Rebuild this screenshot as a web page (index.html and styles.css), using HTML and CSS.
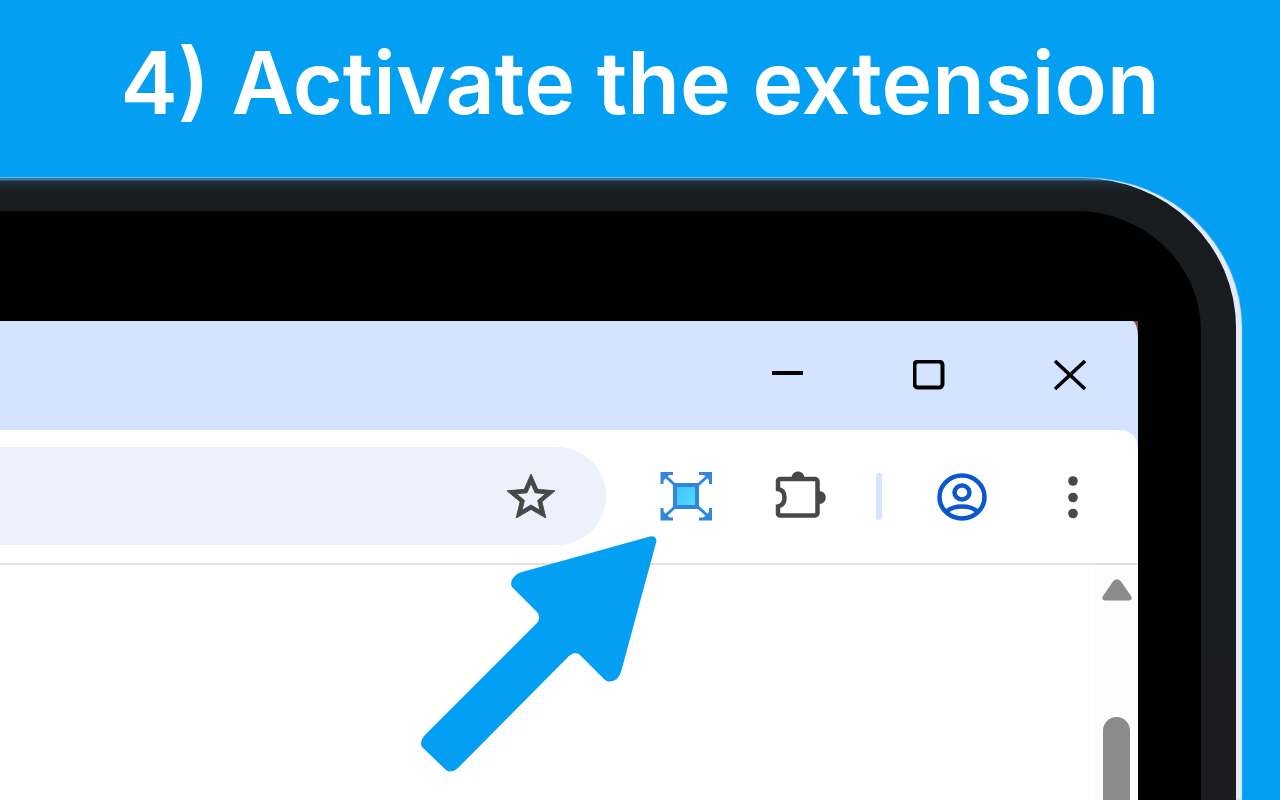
FILE: index.html
```html
<!DOCTYPE html>
<html lang="en">
<head>
  <meta charset="UTF-8">
  <meta name="viewport" content="width=device-width, initial-scale=1">
  <title>Activate the extension</title>
  <link rel="stylesheet" href="styles.css">
</head>
<body>

  <header class="heading">
    <h1>4) Activate the extension</h1>
  </header>

  <main class="laptop">
    <div class="bezel">
      <div class="screen">

        <div class="titlebar">
          <button class="win-btn" aria-label="Minimize">
            <svg viewBox="0 0 32 32"><path d="M0 13h31" stroke-width="4"/></svg>
          </button>
          <button class="win-btn" aria-label="Maximize">
            <svg viewBox="0 0 32 32"><rect x="1.500" y="1.500" width="28" height="26" rx="3.500" stroke-width="4"/></svg>
          </button>
          <button class="win-btn" aria-label="Close">
            <svg viewBox="0 0 32 32"><path d="M1 1l30 28M31 1L1 29" stroke-width="3.500"/></svg>
          </button>
        </div>

        <div class="toolbar-wrap">
          <div class="toolbar">
            <div class="omnibox">
              <button class="star-btn" aria-label="Bookmark this page">
                <svg viewBox="2 2 20 19" preserveAspectRatio="none"><path d="M22 9.240l-7.190-.62L12 2 9.190 8.630 2 9.240l5.460 4.730L5.820 21 12 17.270 18.180 21l-1.630-7.030L22 9.240zM12 15.400l-3.760 2.270 1-4.280-3.320-2.880 4.380-.38L12 6.100l1.710 4.040 4.380.38-3.320 2.880 1 4.280L12 15.400z"/></svg>
              </button>
            </div>

            <button class="tool-btn" aria-label="Fullscreen extension">
              <svg viewBox="0 0 60 60">
                <defs>
                  <linearGradient id="sq" x1="0" y1="0" x2="1" y2="1">
                    <stop offset="0" stop-color="#3fc4f8"/>
                    <stop offset="1" stop-color="#55dcff"/>
                  </linearGradient>
                </defs>
                <g fill="none" stroke="#2f86dc" stroke-width="3">
                  <path d="M6 18V7.500H17M7 8l12 11"/>
                  <path d="M43 7.500h11.500V18M54 8L42 19"/>
                  <path d="M6 42v11H17M7 52l12-11"/>
                  <path d="M43 53h11.500V42M54 52L42 41"/>
                  <rect x="19" y="19" width="22" height="22" fill="url(#sq)" stroke-width="4"/>
                </g>
                <g fill="#2f86dc">
                  <path d="M6 7h9l-9 9zM55 7v9l-9-9zM6 53v-9l9 9zM55 53h-9l9-9z"/>
                </g>
              </svg>
            </button>

            <button class="tool-btn" aria-label="Extensions">
              <svg viewBox="0 0 60 60">
                <path d="M14 13H49a2.500 2.500 0 0 1 2.500 2.500V47a2.500 2.500 0 0 1-2.500 2.500H14a2 2 0 0 1-2-2V40.500Q18.500 39 18.500 31.500T12 23V15a2 2 0 0 1 2-2z" fill="none" stroke="#484848" stroke-width="4.500"/>
                <path d="M25.500 12.500c0-9.500 13-9.500 13 0zM53 25c9 0 9 13 0 13z" fill="#484848"/>
              </svg>
            </button>

            <span class="divider"></span>

            <button class="tool-btn" aria-label="Profile">
              <svg viewBox="0 0 60 60" fill="none" stroke="#0b57d0" stroke-width="4.500">
                <ellipse cx="30" cy="31" rx="22.500" ry="21.500"/>
                <ellipse cx="30" cy="26.500" rx="7.500" ry="7"/>
                <path d="M14.500 45.500Q20 40.500 30 40.500t15.500 5"/>
              </svg>
            </button>

            <button class="tool-btn" aria-label="Menu">
              <svg viewBox="0 0 60 60" fill="#484848">
                <circle cx="31" cy="15" r="4.800"/>
                <circle cx="31" cy="31.500" r="4.800"/>
                <circle cx="31" cy="47.500" r="4.800"/>
              </svg>
            </button>
          </div>
        </div>

        <div class="page">
          <div class="scrollbar">
            <svg class="scroll-up" viewBox="0 0 30 22"><path d="M11 2.500Q15-2 19 2.500L29 17q2 4-2 4.500H3Q-1 21 1 17z"/></svg>
            <div class="thumb"></div>
          </div>
        </div>

        <!-- points at the extension icon -->
        <svg class="arrow" viewBox="0 0 238 238">
          <path d="M230 .5Q236-.5 236.500 5L201 136Q198 145 190 145.500Q187 146 184.500 143.500L161 120Q156 114 149 120L38 232Q31 238 26 234L2 211Q-1 206 5 199L117 87Q121.500 82 117 76L92 51Q89 45 96 39Q98 37 102 36z"/>
        </svg>
      </div>
    </div>
  </main>

</body>
</html>
```
FILE: styles.css
```css
* {
  margin: 0;
  padding: 0;
  box-sizing: border-box;
}

body {
  height: 100vh;
  display: flex;
  flex-direction: column;
  overflow: hidden;
  background-color: #039ff3;
  font-family: Inter, sans-serif;
}

button {
  border: none;
  background: none;
  cursor: pointer;
}

svg {
  display: block;
}

.heading {
  padding: 28px 0 40px;
  text-align: center;
  color: white;
}

.heading h1 {
  font-size: 86px;
  line-height: 110px;
  font-weight: 600;
  white-space: nowrap;
}

.laptop {
  flex: 1;
  min-height: 0;
  display: flex;
  margin-right: 44px;
  padding: 33px 35px 0 0;
  border-top-right-radius: 155px 150px;
  background: linear-gradient(#3f7898 0, #3f7898 2px, #20323e 3px, #191c1f 14px, #1c1c1f 100%);
  box-shadow: 6px 0 1px #e6eaf8, 0 -1px 1px #4cb6ee;
}

.bezel {
  flex: 1;
  min-width: 0;
  display: flex;
  padding: 110px 63px 0 0;
  border-top-right-radius: 125px 120px;
  background-color: black;
}

.screen {
  flex: 1;
  min-width: 0;
  position: relative;
  display: flex;
  flex-direction: column;
  background-color: #8a4b3a;
}

.titlebar {
  height: 109px;
  flex-shrink: 0;
  display: flex;
  justify-content: flex-end;
  align-items: center;
  gap: 109px;
  padding-right: 52px;
  background-color: #d4e3ff;
  border-top-right-radius: 6px 16px;
}

.win-btn,
.win-btn svg {
  width: 32px;
  height: 32px;
}

.win-btn svg {
  fill: none;
  stroke: black;
}

.toolbar-wrap {
  flex-shrink: 0;
  background-color: #d4e3ff;
}

.toolbar {
  display: flex;
  align-items: center;
  gap: 50px;
  padding: 17px 36px 18px 0;
  background-color: white;
  border-bottom: 2px solid #e0e2e2;
  border-top-right-radius: 18px;
}

.omnibox {
  flex: 1;
  height: 98px;
  display: flex;
  justify-content: flex-end;
  align-items: center;
  padding-right: 51px;
  background-color: #ecf1fb;
  border-radius: 0 49px 49px 0;
}

.star-btn svg {
  width: 48px;
  height: 44px;
  fill: #484848;
  stroke: #484848;
  stroke-width: 0.4;
}

.tool-btn,
.tool-btn svg {
  width: 60px;
  height: 60px;
}

.divider {
  width: 6px;
  height: 47px;
  border-radius: 3px;
  background-color: #d4e3ff;
}

.page {
  flex: 1;
  min-height: 0;
  display: flex;
  justify-content: flex-end;
  padding-top: 2px;
  background-color: white;
}

.scrollbar {
  width: 43px;
  display: flex;
  flex-direction: column;
  align-items: center;
  gap: 116px;
  padding-top: 12px;
  background-color: #fcfcfc;
}

.scroll-up {
  width: 30px;
  height: 22px;
  flex-shrink: 0;
  fill: #8b8b8b;
}

.thumb {
  width: 27px;
  flex: 1;
  border-radius: 14px 14px 0 0;
  background-color: #8b8b8b;
}

.arrow {
  position: absolute;
  top: 215px;
  right: 480px;
  width: 238px;
  height: 238px;
  fill: #039ff3;
}
```
